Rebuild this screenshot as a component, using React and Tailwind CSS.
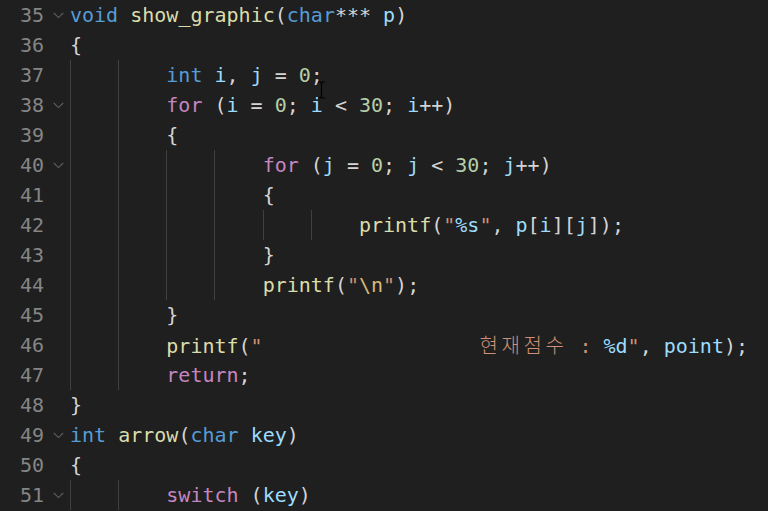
import React from "react";

const C = {
  kw: "text-[#569cd6]",
  ctl: "text-[#c586c0]",
  fn: "text-[#dcdcaa]",
  v: "text-[#9cdcfe]",
  num: "text-[#b5cea8]",
  str: "text-[#ce9178]",
  esc: "text-[#d7ba7d]",
  p: "text-[#d4d4d4]",
};

const t = (cls, s) => ({ cls, s });

const lines = [
  { n: 35, fold: true, ind: 0, toks: [t(C.kw, "void"), t(C.p, " "), t(C.fn, "show_graphic"), t(C.p, "("), t(C.kw, "char"), t(C.p, "*** "), t(C.v, "p"), t(C.p, ")")] },
  { n: 36, ind: 0, toks: [t(C.p, "{")] },
  { n: 37, ind: 2, toks: [t(C.kw, "int"), t(C.p, " "), t(C.v, "i"), t(C.p, ", "), t(C.v, "j"), t(C.p, " = "), t(C.num, "0"), t(C.p, ";")] },
  { n: 38, fold: true, ind: 2, toks: [t(C.ctl, "for"), t(C.p, " ("), t(C.v, "i"), t(C.p, " = "), t(C.num, "0"), t(C.p, "; "), t(C.v, "i"), t(C.p, " < "), t(C.num, "30"), t(C.p, "; "), t(C.v, "i"), t(C.p, "++)")] },
  { n: 39, ind: 2, toks: [t(C.p, "{")] },
  { n: 40, fold: true, ind: 4, toks: [t(C.ctl, "for"), t(C.p, " ("), t(C.v, "j"), t(C.p, " = "), t(C.num, "0"), t(C.p, "; "), t(C.v, "j"), t(C.p, " < "), t(C.num, "30"), t(C.p, "; "), t(C.v, "j"), t(C.p, "++)")] },
  { n: 41, ind: 4, toks: [t(C.p, "{")] },
  { n: 42, ind: 6, toks: [t(C.fn, "printf"), t(C.p, "("), t(C.str, "\""), t(C.v, "%s"), t(C.str, "\""), t(C.p, ", "), t(C.v, "p"), t(C.p, "["), t(C.v, "i"), t(C.p, "]["), t(C.v, "j"), t(C.p, "]);")] },
  { n: 43, ind: 4, toks: [t(C.p, "}")] },
  { n: 44, ind: 4, toks: [t(C.fn, "printf"), t(C.p, "("), t(C.str, "\""), t(C.esc, "\\n"), t(C.str, "\""), t(C.p, ");")] },
  { n: 45, ind: 2, toks: [t(C.p, "}")] },
  { n: 46, ind: 2, korean: true },
  { n: 47, ind: 2, toks: [t(C.ctl, "return"), t(C.p, ";")] },
  { n: 48, ind: 0, toks: [t(C.p, "}")] },
  { n: 49, fold: true, ind: 0, toks: [t(C.kw, "int"), t(C.p, " "), t(C.fn, "arrow"), t(C.p, "("), t(C.kw, "char"), t(C.p, " "), t(C.v, "key"), t(C.p, ")")] },
  { n: 50, ind: 0, toks: [t(C.p, "{")] },
  { n: 51, fold: true, ind: 2, toks: [t(C.ctl, "switch"), t(C.p, " ("), t(C.v, "key"), t(C.p, ")")] },
];

function Chevron() {
  return (
    <svg width="11" height="7" viewBox="0 0 11 7" className="block">
      <path d="M0.8 1 L5.5 5.6 L10.2 1" fill="none" stroke="#5f5f5f" strokeWidth="1.1" />
    </svg>
  );
}

function Korean() {
  return (
    <>
      <span className={C.fn}>printf</span>
      <span className={C.p}>(</span>
      <span className={C.str}>{"\"" + " ".repeat(18)}</span>
      {"현재점수".split("").map((ch, i) => (
        <span
          key={i}
          className={`${C.str} inline-block w-[22px] text-left text-[20px] font-['Noto_Sans_CJK_KR',sans-serif] font-light`}
        >
          {ch}
        </span>
      ))}
      <span className={C.str}>{" : "}</span>
      <span className={C.v}>%d</span>
      <span className={C.str}>"</span>
      <span className={C.p}>, </span>
      <span className={C.v}>point</span>
      <span className={C.p}>);</span>
    </>
  );
}

export default function App() {
  return (
    <div className="relative w-[768px] h-[511px] overflow-hidden bg-[#1f1f1f] font-['DejaVu_Sans_Mono',monospace] text-[20px]">
      {lines.map((l) => (
        <div key={l.n} className="flex h-[30px] leading-[30px] whitespace-pre">
          <div className="w-[44px] text-right text-[#858585]">{l.n}</div>
          <div className="w-[26px] flex items-center pl-[9px]">{l.fold && <Chevron />}</div>
          <div className="flex h-[30px]">
            {Array.from({ length: l.ind }).map((_, i) => (
              <span key={i} className="inline-block w-[4ch] h-[30px] border-l border-[#404040]" />
            ))}
            <span className="h-[30px]">
              {l.korean ? <Korean /> : l.toks.map((k, i) => (
                <span key={i} className={k.cls}>{k.s}</span>
              ))}
            </span>
          </div>
        </div>
      ))}
      <svg className="absolute left-[317px] top-[81px]" width="9" height="18" viewBox="0 0 9 18">
        <path d="M1 1 H3.5 L4.5 2 L5.5 1 H8 M4.5 2 V16 M1 17 H3.5 L4.5 16 L5.5 17 H8" fill="none" stroke="#000" strokeWidth="1.2" />
      </svg>
    </div>
  );
}
